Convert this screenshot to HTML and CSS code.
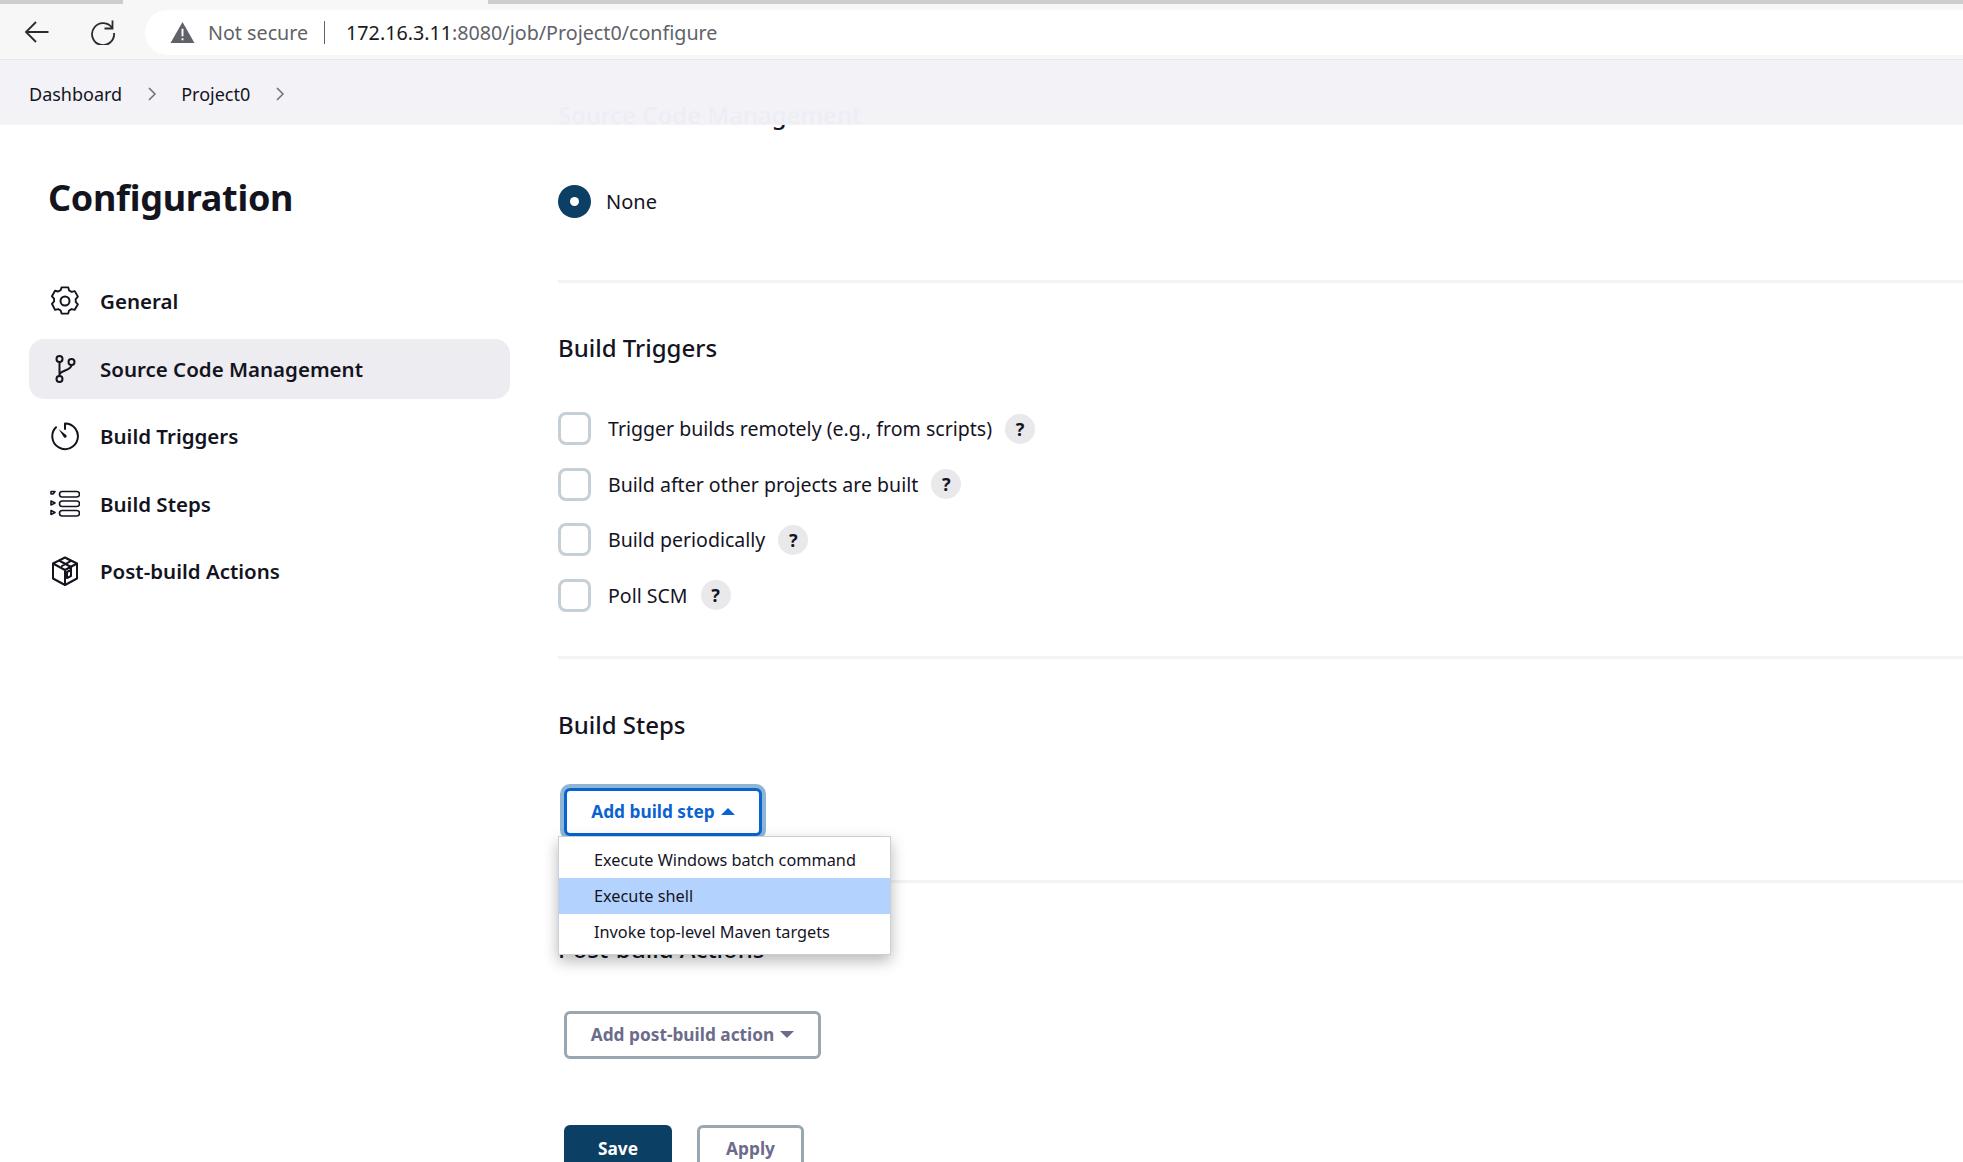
FILE: index.html
```html
<!DOCTYPE html>
<html lang="en">
<head>
<meta charset="utf-8">
<title>Project0 Config</title>
<link rel="stylesheet" href="styles.css">
</head>
<body>
<div class="tabstrip"><div class="tab"></div></div>
<div class="toolbar">
  <svg class="tool-icon" viewBox="0 0 26 26"><path d="M24.5 13H2M12 3 2 13l10 10"/></svg>
  <svg class="tool-icon reload" viewBox="0 0 26 26"><path d="M22.500 1.500v8h-8M22.500 9.500A11 11 0 1 0 24 14"/></svg>
  <div class="omnibox">
    <svg class="warn" viewBox="0 0 26 24"><path d="M13 1 25.500 23H.5z" fill="#5f6368"/><path d="M12 8h2v8h-2zM12 18h2v2.200h-2z" fill="#fff"/></svg>
    <span class="not-secure">Not secure</span>
    <span class="sep"></span>
    <span class="url"><b>172.16.3.11</b>:8080/job/Project0/configure</span>
  </div>
</div>
<div class="page">
  <nav class="breadcrumbs">
    <span>Dashboard</span>
    <svg class="chev" viewBox="0 0 10 16"><path d="m2 2 6 6-6 6"/></svg>
    <span>Project0</span>
    <svg class="chev" viewBox="0 0 10 16"><path d="m2 2 6 6-6 6"/></svg>
  </nav>
  <div class="layout">
    <aside class="sidebar">
      <h1>Configuration</h1>
      <ul class="tasks">
        <li class="task">
          <svg class="task-icon" viewBox="0 0 30 30"><path d="M11.500 2.500h7l1 3.300 2.600 1.500 3.400-.8 3.300 5.900-2.300 2.600v3l0 0 2.300 2.500-3.300 5.900-3.400-.8-2.600 1.500-1 3.300h-7l-1-3.300-2.600-1.500-3.400.8L1.200 20l2.300-2.500v-3L1.200 12l3.300-5.900 3.400.8 2.600-1.500z" transform="translate(.8 -1) scale(.94)"/><circle cx="15" cy="15" r="4.500"/></svg>
          <span>General</span>
        </li>
        <li class="task active">
          <svg class="task-icon" viewBox="0 0 30 30"><circle cx="9.500" cy="5" r="3"/><circle cx="9.500" cy="25" r="3"/><circle cx="21.500" cy="8" r="3"/><path d="M9.500 8v14M21.500 11c0 6-12 5-12 10"/></svg>
          <span>Source Code Management</span>
        </li>
        <li class="task">
          <svg class="task-icon" viewBox="0 0 30 30"><path d="M15 2.500A12.800 12.800 0 1 1 6 6.300M15 3v5"/><path class="solid" d="m8.500 8 8 6.200a1.800 1.800 0 0 1-2.400 2.400z"/></svg>
          <span>Build Triggers</span>
        </li>
        <li class="task">
          <svg class="task-icon thin" viewBox="0 0 30 30"><path d="M1 4h4L3 6.500H1zM1 13.500l4 2-4 2zM1 23l4 2-4 2z" transform="translate(0 -1.500)"/><rect x="9.500" y="2.500" width="20" height="5.500" rx="2.700"/><rect x="9.500" y="12" width="20" height="5.500" rx="2.700"/><rect x="9.500" y="21.500" width="20" height="5.500" rx="2.700"/></svg>
          <span>Build Steps</span>
        </li>
        <li class="task">
          <svg class="task-icon" viewBox="0 0 30 30"><path d="M15 1.500 27 7.500v15l-12 6.500L3 22.500v-15zM3 7.500 15 14l12-6.500M15 14v15M9 4.500 21 11v4M15 1.500l6 3.300M21 4.800 12 10"/><path d="M17 22v-6l4-2v6z"/></svg>
          <span>Post-build Actions</span>
        </li>
      </ul>
    </aside>
    <main class="form">
      <h2 class="scm-title">Source Code Management</h2>
      <label class="radio-row"><span class="radio"></span><span>None</span></label>
      <hr class="rule rule-scm">

      <h2>Build Triggers</h2>
      <div class="checks">
        <label class="check-row"><span class="box"></span><span>Trigger builds remotely (e.g., from scripts)</span><span class="help">?</span></label>
        <label class="check-row"><span class="box"></span><span>Build after other projects are built</span><span class="help">?</span></label>
        <label class="check-row"><span class="box"></span><span>Build periodically</span><span class="help">?</span></label>
        <label class="check-row"><span class="box"></span><span>Poll SCM</span><span class="help">?</span></label>
      </div>
      <hr class="rule rule-triggers">

      <h2>Build Steps</h2>
      <div class="dropdown">
        <button class="btn btn-focus">Add build step <i class="caret up"></i></button>
        <ul class="menu">
          <li>Execute Windows batch command</li>
          <li class="hover">Execute shell</li>
          <li>Invoke top-level Maven targets</li>
        </ul>
      </div>
      <hr class="rule rule-steps">

      <h2 class="post-title">Post-build Actions</h2>
      <button class="btn btn-plain btn-post">Add post-build action <i class="caret"></i></button>
      <div class="actions">
        <button class="btn btn-save">Save</button>
        <button class="btn btn-plain btn-apply">Apply</button>
      </div>
    </main>
  </div>
</div>
</body>
</html>
```
FILE: styles.css
```css
* { box-sizing: border-box; }
html, body { margin: 0; height: 1162px; overflow: hidden; background: #fff; }
body { font-family: "Noto Sans", "Liberation Sans", sans-serif; color: #14141f; }

.tabstrip { height: 4px; background: #cdcdcd; padding-left: 123px; }
.tab { width: 365px; height: 4px; background: #f7f7f7; }
.toolbar { height: 56px; background: #f7f7f7; border-bottom: 1px solid #e6e6e6; display: flex; align-items: flex-start; padding: 6px 0 0 24px; gap: 41px; }
.tool-icon { width: 26px; height: 26px; margin-top: 9px; fill: none; stroke: #2b2b2b; stroke-width: 1.800; flex: none; }
.reload { margin-left: -1px; }
.omnibox { flex: 1; height: 45px; margin-left: -12px; background: #fff; border-radius: 23px 0 0 23px; display: flex; align-items: center; padding-left: 25px; font-size: 19.700px; }
.warn { width: 25px; height: 23px; margin-right: 13px; flex: none; }
.not-secure { color: #5f6368; }
.sep { width: 1px; height: 23px; background: #5f6368; margin: 0 21px 0 16px; }
.url { color: #5f6368; }
.url b { color: #1a1a1a; font-weight: 400; }

.page { position: relative; }
.breadcrumbs { position: relative; z-index: 2; height: 65px; background: rgba(242, 242, 247, .98); display: flex; align-items: center; padding: 2px 0 0 29px; font-size: 18px; font-weight: 400; color: #14141f; }
.chev { width: 10px; height: 16px; margin: 0 24px 0 25px; fill: none; stroke: #6f6f78; stroke-width: 1.500; flex: none; }

.layout { display: flex; align-items: flex-start; }
.sidebar { width: 558px; flex: none; padding: 47px 0 0 29px; }
.sidebar h1 { margin: 0 0 47px 19px; font-size: 36px; line-height: 52px; font-weight: 700; letter-spacing: -.3px; }
.tasks { list-style: none; margin: 0; padding: 0; width: 481px; display: flex; flex-direction: column; gap: 7.500px; }
.task { height: 60px; display: flex; align-items: center; gap: 20px; padding-left: 21px; border-radius: 15px; font-size: 20.500px; font-weight: 600; }
.task.active { background: #edecf1; }
.task-icon { width: 30px; height: 30px; fill: none; stroke: #14141f; stroke-width: 2; stroke-linejoin: round; stroke-linecap: round; flex: none; }
.task-icon.thin { stroke-width: 1.600; }
.task-icon .solid { fill: #14141f; stroke: none; }

.form { flex: 1; min-width: 0; margin-top: -28px; }
.form h2 { margin: 0; font-size: 24px; font-weight: 500; line-height: 36px; }
.radio-row { display: flex; align-items: center; gap: 15px; font-size: 20px; margin-top: 52px; height: 33px; }
.radio { width: 33px; height: 33px; border-radius: 50%; background: #0b3f63; display: flex; align-items: center; justify-content: center; }
.radio::after { content: ""; width: 9px; height: 9px; border-radius: 50%; background: #fff; }
.rule { height: 3px; margin: 0; border: 0; background: #f3f3f7; }
.rule-scm { margin-top: 62px; margin-bottom: 47px; }
.checks { display: flex; flex-direction: column; gap: 22.600px; margin-top: 46px; }
.check-row { display: flex; align-items: center; height: 33px; font-size: 19.550px; }
.box { width: 33px; height: 33px; border: 3px solid #c4cfd6; border-radius: 8px; margin-right: 17px; flex: none; }
.help { width: 30px; height: 30px; border-radius: 50%; background: #e9e9ec; margin-left: 13px; display: flex; align-items: center; justify-content: center; font-size: 18px; font-weight: 700; flex: none; }
.rule-triggers { margin-top: 44px; margin-bottom: 48px; }

.dropdown { position: relative; margin-top: 45px; margin-left: 6px; }
.btn { font-family: inherit; font-size: 17.300px; font-weight: 700; background: #fff; border-radius: 6px; display: inline-flex; align-items: center; justify-content: center; padding: 0; }
.btn-focus { width: 198px; height: 48px; border: 3px solid #0b63d1; color: #0b63d1; box-shadow: 0 0 0 4px #8cb6d3; gap: 6px; }
.caret { width: 0; height: 0; border-left: 7px solid transparent; border-right: 7px solid transparent; border-top: 7px solid currentColor; }
.caret.up { border-top: 0; border-bottom: 7px solid currentColor; }
.menu { position: absolute; z-index: 3; left: -6px; top: 48px; width: 333px; margin: 0; padding: 5px 0 4px; list-style: none; background: #fff; border: 1px solid #c5d0d8; box-shadow: 0 6px 14px rgba(0, 0, 0, .28); font-size: 16.300px; }
.menu li { height: 36px; line-height: 36px; padding-left: 35px; }
.menu .hover { background: #b3d3fe; }
.rule-steps { margin-top: 44px; margin-bottom: 48px; }
.btn-plain { border: 3px solid #9aa7b0; color: #6c6b8b; gap: 6px; }
.btn-post { width: 257px; height: 48px; margin: 44px 0 0 6px; }
.actions { display: flex; gap: 25px; margin: 66px 0 0 6px; }
.btn-save { width: 108px; height: 48px; background: #0b3f63; color: #fff; border: 0; }
.btn-apply { width: 107px; height: 48px; }
```
